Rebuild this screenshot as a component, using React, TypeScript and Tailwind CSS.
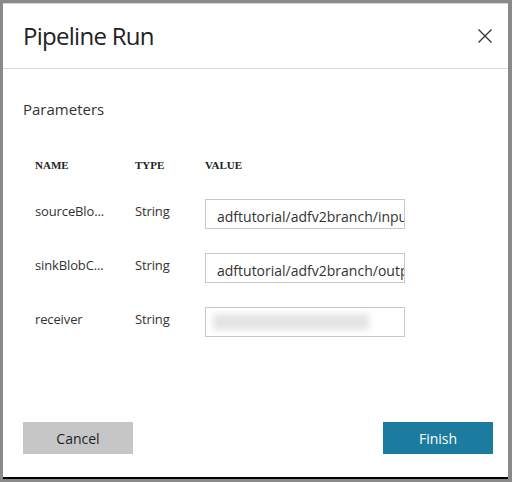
const font = { fontFamily: '"Open Sans", "Noto Sans", sans-serif' }

const params = [
  { name: 'sourceBlo...', type: 'String', value: 'adftutorial/adfv2branch/input' },
  { name: 'sinkBlobC...', type: 'String', value: 'adftutorial/adfv2branch/output' },
  { name: 'receiver', type: 'String', value: '' },
]

function ValueBox({ value }: { value: string }) {
  return (
    <div className="h-[30px] w-[200px] border border-[#c8c8c8] bg-white pl-[11px] pr-[2px] pt-[7px] overflow-hidden whitespace-nowrap text-[14px] leading-[20px] text-[#333]">
      {value ? (
        value
      ) : (
        <div className="mt-[-1px] ml-[-4px] h-[16px] w-[156px] bg-[#e4e4e4] blur-[3px]" />
      )}
    </div>
  )
}

export default function App() {
  return (
    <div className="w-[512px] h-[482px] bg-[#8a8a8a] pt-[3px] pl-[3px] pr-[4px] pb-[3px]" style={font}>
      <div className="h-full flex flex-col bg-white border-t border-t-[#d4d4d4] border-b-2 border-b-black">
        <div className="h-[65px] shrink-0 flex items-center justify-between pl-[20px] pr-[16px] border-b border-[#dadada]">
          <h1 className="text-[24px] leading-[32px] text-[#222] tracking-[-0.03em]">Pipeline Run</h1>
          <svg width="14" height="14" viewBox="0 0 14 14" className="text-[#333]">
            <path d="M0.5 0.5 L13.5 13.5 M13.5 0.5 L0.5 13.5" stroke="currentColor" strokeWidth="1.3" fill="none" />
          </svg>
        </div>

        <div className="flex-1 pl-[20px]">
          <p className="mt-[30px] text-[15px] leading-[20px] text-[#333]">Parameters</p>

          <div
            className="mt-[38px] ml-[12px] grid grid-cols-[100px_70px_200px] text-[11px] leading-[16px] font-bold text-[#222] uppercase"
            style={{ fontFamily: '"Liberation Serif", serif' }}
          >
            <span>Name</span>
            <span>Type</span>
            <span>Value</span>
          </div>

          <div className="mt-[26px] ml-[12px] flex flex-col gap-[24px]">
            {params.map((p) => (
              <div key={p.name} className="grid grid-cols-[100px_70px_200px] items-start text-[13px] leading-[20px] text-[#333]">
                <span className="pt-[2px] tracking-[-0.01em]">{p.name}</span>
                <span className="pt-[2px] tracking-[-0.01em]">{p.type}</span>
                <ValueBox value={p.value} />
              </div>
            ))}
          </div>
        </div>

        <div className="flex justify-between pl-[20px] pr-[15px] pb-[23px]">
          <button className="h-[32px] w-[110px] bg-[#c6c6c6] text-[14px] text-[#222]">Cancel</button>
          <button className="h-[32px] w-[110px] bg-[#1b7c9f] text-[14px] text-white">Finish</button>
        </div>
      </div>
    </div>
  )
}
